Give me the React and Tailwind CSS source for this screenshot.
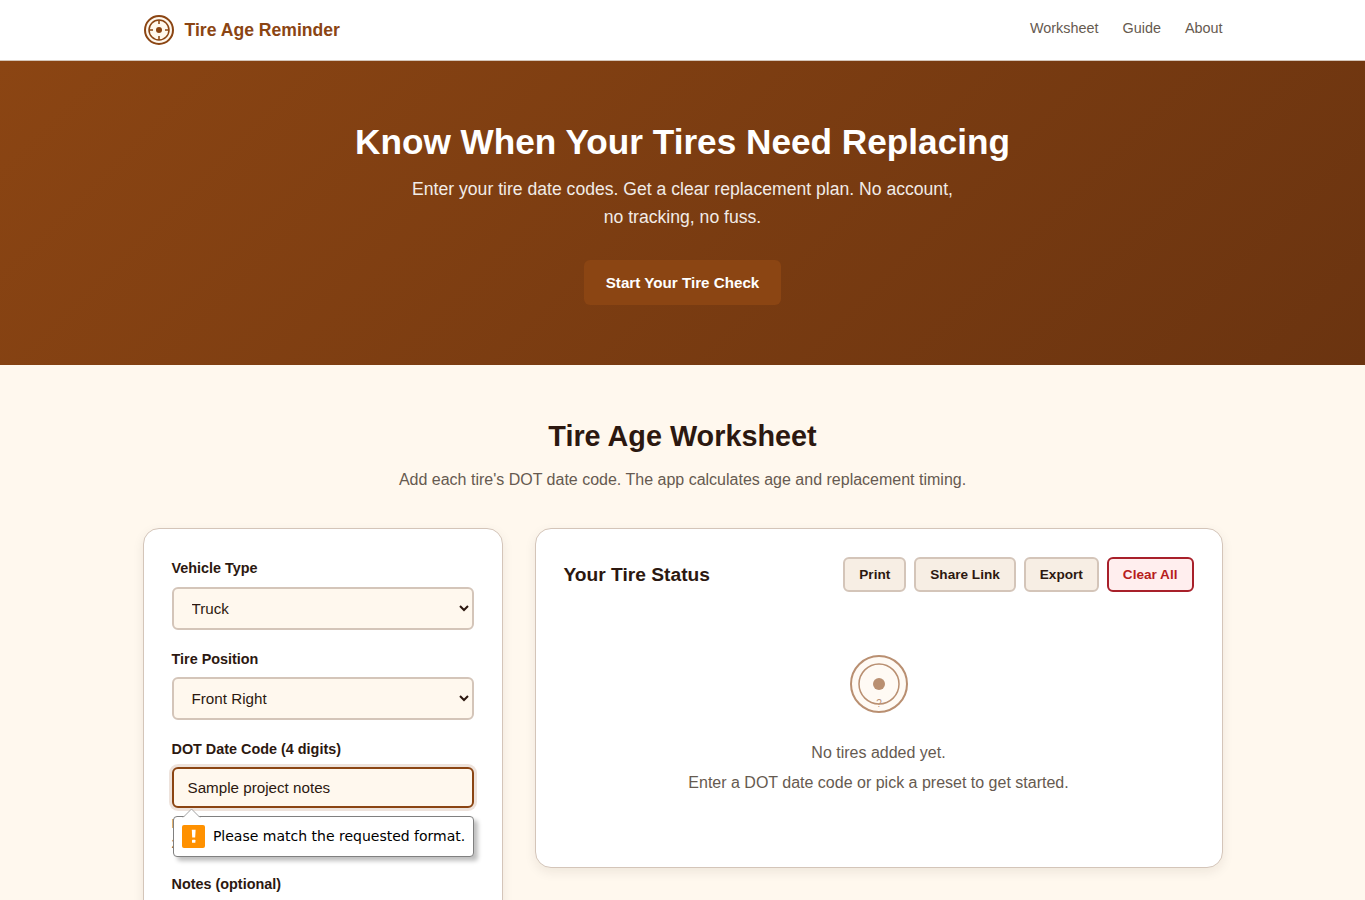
import { useState } from 'react'
import { clsx } from 'clsx'

const NAV = ['Worksheet', 'Guide', 'About']

const controlClass =
    'block w-full rounded-md border-2 bg-[#fff8ee] px-[14px] py-[9px] text-[15.2px] leading-normal text-[#2c1810] outline-none'

function LogoMark() {
    return (
        <svg width="32" height="32" viewBox="0 0 32 32" fill="none" stroke="#8b4513">
            <circle cx="16" cy="16" r="14" strokeWidth="2" fill="#fff8ee" />
            <circle cx="16" cy="16" r="10" strokeWidth="1.5" />
            <circle cx="16" cy="16" r="3" fill="#8b4513" stroke="none" />
            <path d="M16 6v4M16 22v4M6 16h4M22 16h4" strokeWidth="1.5" />
        </svg>
    )
}

function EmptyTire() {
    return (
        <svg className="opacity-60" width="64" height="64" viewBox="0 0 64 64" fill="none" stroke="#8b4513">
            <circle cx="32" cy="32" r="28" strokeWidth="2" fill="#fff8ee" />
            <circle cx="32" cy="32" r="20" strokeWidth="1.5" />
            <circle cx="32" cy="32" r="6" fill="#8b4513" stroke="none" />
            <text x="32" y="55" textAnchor="middle" fontSize="10" fill="#8b4513" stroke="none">?</text>
        </svg>
    )
}

function Field({ label, children }) {
    return (
        <div className="mb-[17.7px]">
            <label className="mb-[6.6px] block text-[14.4px] leading-[23px] font-semibold">{label}</label>
            {children}
        </div>
    )
}

function FormatTooltip() {
    return (
        <div className="absolute top-[calc(100%+8px)] left-[1.5px] z-10 flex h-[41px] w-[301px] items-center gap-2 rounded-[4px] border border-[#808080] bg-white pl-2 shadow-[4px_4px_4px_rgba(0,0,0,0.25)]">
            <svg className="absolute -top-[9px] left-[7.5px]" width="20" height="10" viewBox="0 0 20 10">
                <path d="M1 9.5 L9.5 1 L18 9.5" fill="#fff" stroke="#a0a0a0" />
                <path d="M1.5 9.5H17.5" stroke="#fff" />
            </svg>
            <svg className="shrink-0" width="23" height="23" viewBox="0 0 23 23">
                <rect width="23" height="23" rx="2" fill="#ff9100" />
                <path d="M9.8 4.8h3.8l-.4 7.7h-3z" fill="#fff" />
                <rect x="10" y="14.7" width="3.4" height="3" rx="0.5" fill="#fff" />
            </svg>
            <span className="-ml-[0.1px] pb-px font-['DejaVu_Sans',sans-serif] text-[14px] leading-[18px] whitespace-nowrap text-black">
                Please match the requested format.
            </span>
        </div>
    )
}

function ToolButton({ children, danger }) {
    return (
        <button
            className={clsx(
                'h-[35px] rounded-md border-2 px-[14px] pt-px text-[13.6px] font-semibold',
                danger ? 'border-[#a8202a] bg-[#ffeeee] text-[#b71c1c]' : 'border-[#d4c5b9] bg-[#f7eee4]'
            )}
        >
            {children}
        </button>
    )
}

export default function App() {
    const [vehicle, setVehicle] = useState('Truck')
    const [position, setPosition] = useState('Front Right')
    const [code, setCode] = useState('Sample project notes')

    return (
        <div className="h-[900px] overflow-hidden bg-[#fff8ee] font-['Liberation_Sans',Arial,sans-serif] text-[#2c1810]">
            <header className="h-[61px] border-b border-[#d4c5b9] bg-white">
                <div className="mx-auto flex h-[60px] w-[1080px] items-center justify-between">
                    <div className="flex items-center gap-[10px] text-[17.6px] font-bold text-[#8b4513]">
                        <LogoMark />
                        Tire Age Reminder
                    </div>
                    <nav className="flex gap-6 pb-[2.5px] text-[14.4px] text-[#665a50]">
                        {NAV.map((item) => (
                            <a key={item}>{item}</a>
                        ))}
                    </nav>
                </div>
            </header>

            <section className="flex h-[304px] flex-col items-center bg-[linear-gradient(135deg,#8b4513_0%,#6b3410_100%)] pt-[60px] text-white">
                <h1 className="text-[35.2px] leading-[42px] font-bold">Know When Your Tires Need Replacing</h1>
                <p className="mt-3 w-[560px] text-center text-[17.6px] leading-[28px] opacity-90">
                    Enter your tire date codes. Get a clear replacement plan. No account, no tracking, no fuss.
                </p>
                <button className="mt-[29px] h-[45px] w-[197px] rounded-md bg-[#8b4513] pt-[2px] text-[15.2px] font-semibold">
                    Start Your Tire Check
                </button>
            </section>

            <main className="mx-auto w-[1080px] pt-[48px]">
                <h2 className="text-center text-[28.8px] leading-[46px] font-bold">Tire Age Worksheet</h2>
                <p className="mt-2 text-center text-base leading-[26px] text-[#665a50]">
                    Add each tire's DOT date code. The app calculates age and replacement timing.
                </p>

                <div className="mt-[35px] grid grid-cols-[360px_688px] items-start gap-8">
                    <form className="rounded-2xl border border-[#d4c5b9] bg-white p-7 shadow-[0_4px_12px_rgba(44,24,16,0.08)]">
                        <Field label="Vehicle Type">
                            <select
                                className={clsx(controlClass, 'h-[43.3px] border-[#d4c5b9]')}
                                value={vehicle}
                                onChange={(e) => setVehicle(e.target.value)}
                            >
                                <option>Truck</option>
                                <option>Car</option>
                            </select>
                        </Field>
                        <Field label="Tire Position">
                            <select
                                className={clsx(controlClass, 'h-[42.7px] border-[#d4c5b9]')}
                                value={position}
                                onChange={(e) => setPosition(e.target.value)}
                            >
                                <option>Front Right</option>
                                <option>Front Left</option>
                            </select>
                        </Field>
                        <Field label="DOT Date Code (4 digits)">
                            <div className="relative -mt-[0.2px]">
                                <input
                                    className={clsx(controlClass, 'h-[41px] border-[#8b4513] shadow-[0_0_0_3px_rgba(139,69,19,0.15)]')}
                                    value={code}
                                    onChange={(e) => setCode(e.target.value)}
                                />
                                <FormatTooltip />
                            </div>
                            <p className="mt-[6px] pb-[1.4px] text-[12.8px] leading-[20px] text-[#665a50]">
                                Find it on the tire sidewall. Example:
                                <br />
                                2319 = week 23 of 2019
                            </p>
                        </Field>
                        <Field label="Notes (optional)">
                            <input className={clsx(controlClass, 'border-[#d4c5b9]')} />
                        </Field>
                    </form>

                    <section className="h-[340px] rounded-2xl border border-[#d4c5b9] bg-white p-7 shadow-[0_4px_12px_rgba(44,24,16,0.08)]">
                        <div className="flex h-[35px] items-center justify-between">
                            <h3 className="text-[19.2px] leading-[30px] font-bold">Your Tire Status</h3>
                            <div className="flex gap-2">
                                <ToolButton>Print</ToolButton>
                                <ToolButton>Share Link</ToolButton>
                                <ToolButton>Export</ToolButton>
                                <ToolButton danger>Clear All</ToolButton>
                            </div>
                        </div>
                        <div className="flex flex-col items-center pt-[60px] text-base text-[#665a50]">
                            <EmptyTire />
                            <p className="mt-6 leading-[26px]">No tires added yet.</p>
                            <p className="mt-1 leading-[26px]">Enter a DOT date code or pick a preset to get started.</p>
                        </div>
                    </section>
                </div>
            </main>
        </div>
    )
}
